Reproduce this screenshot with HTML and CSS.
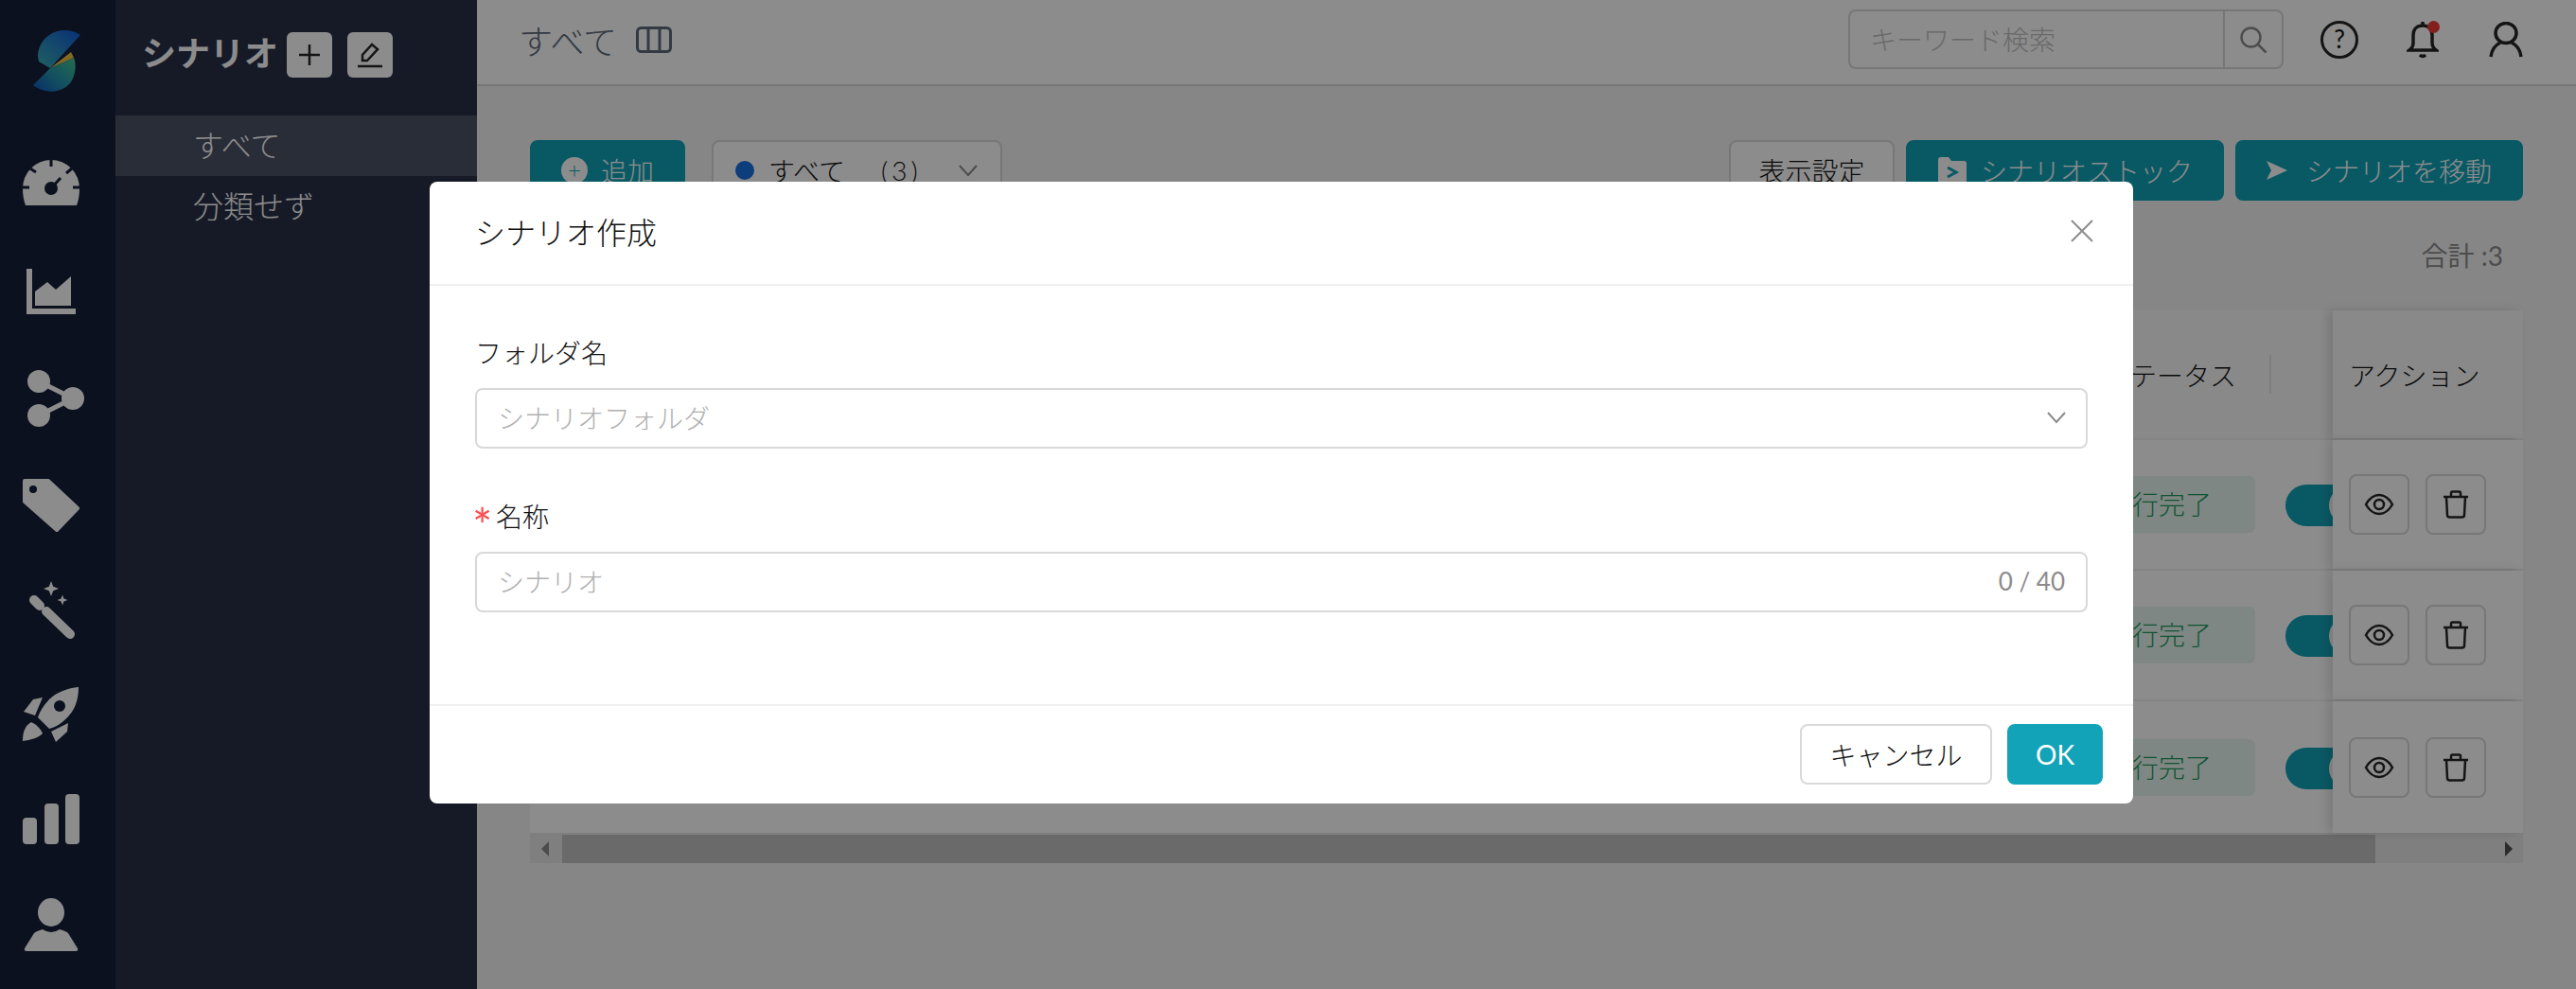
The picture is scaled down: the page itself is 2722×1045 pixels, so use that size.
FILE: index.html
```html
<!DOCTYPE html>
<html lang="ja">
<head>
    <meta charset="UTF-8">
    <title>シナリオ</title>
    <link rel="stylesheet" href="styles.css">
</head>
<body>
    <svg class="defs" aria-hidden="true">
        <symbol id="eye" viewBox="0 0 32 24">
            <path d="M2 12C6 5 10 2 16 2s10 3 14 10c-4 7-8 10-14 10S6 19 2 12z"/>
            <circle cx="16" cy="12" r="5"/>
        </symbol>
        <symbol id="trash" viewBox="0 0 28 30">
            <path d="M1 7h26M4 7l1 19q0 2.500 2.500 2.500h13q2.500 0 2.500-2.500l1-19M9 7V3q0-1.500 1.500-1.500h7Q19 1.500 19 3v4"/>
        </symbol>
        <symbol id="chevron" viewBox="0 0 20 14">
            <path d="M1 2l9 10 9-10"/>
        </symbol>
    </svg>

    <div class="app">
        <nav class="rail">
            <div class="rail-logo">
                <svg width="122" height="138" viewBox="0 0 122 138">
                    <defs>
                        <linearGradient id="logo-top" x1="1" y1="0" x2="0" y2="1">
                            <stop offset="0" stop-color="#1059d8"/>
                            <stop offset="1" stop-color="#3ab0b0"/>
                        </linearGradient>
                        <linearGradient id="logo-bottom" x1="1" y1="0" x2="0" y2="1">
                            <stop offset="0" stop-color="#45c890"/>
                            <stop offset="0.55" stop-color="#2290b0"/>
                            <stop offset="1" stop-color="#0f50c0"/>
                        </linearGradient>
                    </defs>
                    <path fill="url(#logo-top)" d="M85 37C76 31 62 30 52 37 42 44 38 56 41 65l12 7z"/>
                    <path fill="#f0c040" d="M53 72l22-17 3 6z"/>
                    <path fill="url(#logo-bottom)" d="M53 72l25-11C81 68 80 80 74 88 66 97 50 101 35 90z"/>
                </svg>
            </div>
            <div class="rail-item">
                <svg width="122" height="112" viewBox="0 0 122 112">
                    <path class="ico" d="M27 79Q24 71 24 61A30 30 0 0 1 84 61Q84 71 81 79z"/>
                    <path class="ico-cut" d="M54 31v7M32 40l6 4M76 40l-6 5M24 60h7M77 60h7M54 61L64 50"/>
                    <circle class="ico-hole" cx="54" cy="61" r="7"/>
                </svg>
            </div>
            <div class="rail-item">
                <svg width="122" height="112" viewBox="0 0 122 112">
                    <path class="ico" d="M28 34h6v42h46v6H28z"/>
                    <path class="ico" d="M37 73V58l13-10 9 8 16-14v31z"/>
                </svg>
            </div>
            <div class="rail-item">
                <svg width="122" height="112" viewBox="0 0 122 112">
                    <path class="ico-line" d="M41 41L77 59 41 77"/>
                    <circle class="ico" cx="41" cy="41" r="12"/>
                    <circle class="ico" cx="77" cy="59" r="12"/>
                    <circle class="ico" cx="41" cy="77" r="12"/>
                </svg>
            </div>
            <div class="rail-item">
                <svg width="122" height="112" viewBox="0 0 122 112">
                    <path class="ico ico-round" d="M26 34h25l31 29-22 23-34-30z"/>
                    <circle class="ico-hole" cx="35" cy="43" r="4"/>
                </svg>
            </div>
            <div class="rail-item">
                <svg width="122" height="112" viewBox="0 0 122 112">
                    <path class="ico-line ico-head" d="M36 48l6 6"/>
                    <path class="ico-line ico-stick" d="M49 60l25 24"/>
                    <path class="ico" d="M54 28l2.200 5.800L62 36l-5.800 2.200L54 44l-2.200-5.800L46 36l5.800-2.200z"/>
                    <path class="ico" d="M66 42.500l1.500 4 4 1.500-4 1.500-1.500 4-1.500-4-4-1.500 4-1.500z"/>
                </svg>
            </div>
            <div class="rail-item">
                <svg width="122" height="112" viewBox="0 0 122 112">
                    <path class="ico" d="M83 28C72 29 60 33 52 41 46 47 42 54 40 60L52 72C60 70 67 65 73 58 80 50 83 40 83 28z"/>
                    <circle class="ico-hole" cx="63" cy="48" r="6"/>
                    <path class="ico" d="M25 54L35 41 45 39 37 58z"/>
                    <path class="ico" d="M72 66L71 75 59 86 54 75z"/>
                    <path class="ico" d="M24 85C24 76 26 69 33 65 38 67 43 72 45 77 40 82 32 84 24 85z"/>
                </svg>
            </div>
            <div class="rail-item">
                <svg width="122" height="112" viewBox="0 0 122 112">
                    <rect class="ico" x="24" y="54" width="15" height="28" rx="4"/>
                    <rect class="ico" x="47" y="39" width="15" height="43" rx="4"/>
                    <rect class="ico" x="69" y="29" width="15" height="53" rx="4"/>
                </svg>
            </div>
            <div class="rail-item">
                <svg width="122" height="112" viewBox="0 0 122 112">
                    <ellipse class="ico" cx="54" cy="42" rx="14" ry="15"/>
                    <path class="ico" d="M26 80L36 64Q38 62 45 60 54 66 63 60 70 62 72 64L82 80Q83 83 80 83H28Q25 83 26 80z"/>
                </svg>
            </div>
        </nav>

        <aside class="sidebar">
            <div class="sidebar-head">
                <span class="sidebar-title">シナリオ</span>
                <button class="square-btn">
                    <svg width="24" height="24" viewBox="0 0 24 24"><path class="ico-dark" d="M12 1v22M1 12h22"/></svg>
                </button>
                <button class="square-btn">
                    <svg width="28" height="28" viewBox="0 0 28 28"><path class="ico-dark" d="M6 20v-6L16 3l6 5-11 12zM1 26h26"/></svg>
                </button>
            </div>
            <div class="side-item selected">すべて</div>
            <div class="side-item">分類せず</div>
        </aside>

        <main class="main">
            <header class="topbar">
                <div class="crumb">
                    <span class="crumb-text">すべて</span>
                    <svg width="38" height="28" viewBox="0 0 38 28">
                        <rect class="ico-col" x="1.500" y="1.500" width="35" height="25" rx="4"/>
                        <path class="ico-col" d="M13 2v24M25 2v24"/>
                    </svg>
                </div>
                <div class="top-right">
                    <div class="search">
                        <input class="search-input" placeholder="キーワード検索">
                        <span class="search-btn">
                            <svg width="30" height="30" viewBox="0 0 30 30"><circle class="ico-grey" cx="12.500" cy="12.500" r="10"/><path class="ico-grey" d="M19.500 19.500l9 9"/></svg>
                        </span>
                    </div>
                    <div class="top-icon"><span class="help">?</span></div>
                    <div class="top-icon bell">
                        <svg width="34" height="40" viewBox="0 0 34 40">
                            <path class="ico-dark ico-bold" d="M3 31q4-3 4-8v-8C7 9 11 5 17 5s10 4 10 10v8q0 5 4 8zM17 1v4M14 36q3 3 6 0"/>
                        </svg>
                        <span class="bell-dot"></span>
                    </div>
                    <div class="top-icon">
                        <svg width="36" height="38" viewBox="0 0 36 38">
                            <ellipse class="ico-dark ico-bold" cx="18" cy="12" rx="11" ry="10.500"/>
                            <path class="ico-dark ico-bold" d="M2 37c1-8 6-13 10-15M34 37c-1-8-6-13-10-15"/>
                        </svg>
                    </div>
                </div>
            </header>

            <section class="content">
                <div class="toolbar">
                    <button class="btn primary add-btn">
                        <span class="plus-dot">+</span>追加
                    </button>
                    <div class="status-select">
                        <span class="status-dot"></span>
                        <span>すべて</span>
                        <span class="status-count">(3)</span>
                        <svg class="chev" width="20" height="14"><use href="#chevron"/></svg>
                    </div>
                    <div class="toolbar-right">
                        <button class="btn">表示設定</button>
                        <button class="btn primary stock-btn">
                            <svg width="32" height="30" viewBox="0 0 32 30">
                                <path class="ico" d="M1 4q0-3 3-3h8l3 4h13q3 0 3 3v19q0 3-3 3H4q-3 0-3-3z"/>
                                <path class="ico-share" d="M11 12l9 5-9 5"/>
                            </svg>
                            シナリオストック
                        </button>
                        <button class="btn primary move-btn">
                            <svg width="22" height="20" viewBox="0 0 22 20"><path class="ico" d="M0 0l22 10L0 20l5-10z"/></svg>
                            シナリオを移動
                        </button>
                    </div>
                </div>

                <div class="summary">合計 :3</div>

                <div class="table">
                    <div class="row head-row">
                        <div class="cell-main">
                            <span>ステータス</span>
                            <span class="col-sep"></span>
                        </div>
                        <div class="cell-action">アクション</div>
                    </div>
                    <div class="row">
                        <div class="cell-main">
                            <span class="tag">実行完了</span>
                            <span class="switch"><span class="knob"></span></span>
                        </div>
                        <div class="cell-action">
                            <button class="icon-btn"><svg width="32" height="24"><use href="#eye"/></svg></button>
                            <button class="icon-btn"><svg width="28" height="30"><use href="#trash"/></svg></button>
                        </div>
                    </div>
                    <div class="row">
                        <div class="cell-main">
                            <span class="tag">実行完了</span>
                            <span class="switch"><span class="knob"></span></span>
                        </div>
                        <div class="cell-action">
                            <button class="icon-btn"><svg width="32" height="24"><use href="#eye"/></svg></button>
                            <button class="icon-btn"><svg width="28" height="30"><use href="#trash"/></svg></button>
                        </div>
                    </div>
                    <div class="row last-row">
                        <div class="cell-main">
                            <span class="tag">実行完了</span>
                            <span class="switch"><span class="knob"></span></span>
                        </div>
                        <div class="cell-action">
                            <button class="icon-btn"><svg width="32" height="24"><use href="#eye"/></svg></button>
                            <button class="icon-btn"><svg width="28" height="30"><use href="#trash"/></svg></button>
                        </div>
                    </div>
                    <div class="scrollbar">
                        <span class="arrow-left"></span>
                        <span class="thumb"></span>
                        <span class="arrow-right"></span>
                    </div>
                </div>
            </section>
        </main>
    </div>

    <div class="overlay">
        <div class="modal">
            <div class="modal-head">
                <span class="modal-title">シナリオ作成</span>
                <svg width="24" height="24" viewBox="0 0 24 24"><path class="ico-close" d="M1 1l22 22M23 1L1 23"/></svg>
            </div>
            <div class="modal-body">
                <div class="form-item">
                    <label class="form-label">フォルダ名</label>
                    <div class="field">
                        <span class="placeholder">シナリオフォルダ</span>
                        <svg class="field-chev" width="20" height="14"><use href="#chevron"/></svg>
                    </div>
                </div>
                <div class="form-item">
                    <label class="form-label"><span class="required">*</span>名称</label>
                    <div class="field">
                        <span class="placeholder">シナリオ</span>
                        <span class="counter">0 / 40</span>
                    </div>
                </div>
            </div>
            <div class="modal-foot">
                <button class="btn cancel-btn">キャンセル</button>
                <button class="btn ok-btn">OK</button>
            </div>
        </div>
    </div>
</body>
</html>
```

FILE: styles.css
```css
* {
    box-sizing: border-box;
}
html, body {
    margin: 0;
    height: 100%;
}
body {
    font-family: Lato, "Noto Sans CJK JP", sans-serif;
    font-size: 28px;
    font-weight: 300;
    color: #111;
    overflow: hidden;
}
button {
    font: inherit;
}
.defs {
    display: none;
}

.app {
    display: flex;
    height: 1045px;
}

/* icon rail */
.rail {
    width: 122px;
    flex: none;
    background: #141f37;
}
.rail-logo {
    height: 138px;
}
.rail-item {
    height: 112px;
}
.rail svg {
    display: block;
}
.ico {
    fill: #fff;
}
.ico-round {
    stroke: #fff;
    stroke-width: 4;
    stroke-linejoin: round;
}
.ico-hole {
    fill: #141f37;
}
.ico-cut {
    fill: none;
    stroke: #141f37;
    stroke-width: 3;
}
.ico-line {
    fill: none;
    stroke: #fff;
    stroke-width: 5;
}
.ico-head {
    stroke-width: 10;
    stroke-linecap: round;
}
.ico-stick {
    stroke-width: 10;
    stroke-linecap: round;
}
.ico-share {
    fill: none;
    stroke: #12a3b8;
    stroke-width: 3;
}

/* folder sidebar */
.sidebar {
    width: 382px;
    flex: none;
    background: #283147;
    color: #fff;
}
.sidebar-head {
    height: 122px;
    padding: 34px 0 0 28px;
    display: flex;
    align-items: flex-start;
    gap: 16px;
}
.sidebar-title {
    font-size: 36px;
    font-weight: 700;
    line-height: 44px;
    margin-right: -7px;
}
.square-btn {
    width: 48px;
    height: 48px;
    padding: 0;
    border: none;
    border-radius: 6px;
    background: #fff;
    display: flex;
    align-items: center;
    justify-content: center;
}
.ico-dark {
    fill: none;
    stroke: #262626;
    stroke-width: 2.500;
}
.ico-bold {
    stroke-width: 3.500;
}
.side-item {
    height: 64px;
    line-height: 64px;
    padding-left: 82px;
    font-size: 32px;
}
.side-item.selected {
    background: #4c5266;
}

/* main area */
.main {
    flex: 1;
    min-width: 0;
    background: #f4f4f5;
}
.topbar {
    height: 91px;
    background: #fff;
    border-bottom: 2px solid #d9d9d9;
    display: flex;
    align-items: center;
    justify-content: space-between;
    padding: 0 54px 6px 44px;
}
.crumb {
    display: flex;
    align-items: center;
    gap: 20px;
}
.crumb-text {
    font-size: 36px;
    color: #5f6a7a;
}
.ico-col {
    fill: none;
    stroke: #5f6a7a;
    stroke-width: 3;
}
.top-right {
    display: flex;
    align-items: center;
    gap: 48px;
}
.search {
    width: 460px;
    height: 63px;
    margin-right: -9px;
    border: 2px solid #d9d9d9;
    border-radius: 8px;
    display: flex;
}
.search-input {
    flex: 1;
    min-width: 0;
    border: none;
    background: none;
    outline: none;
    padding: 0 0 0 21px;
    font: inherit;
}
.search-input::placeholder {
    color: #bfbfbf;
}
.search-btn {
    width: 62px;
    flex: none;
    border-left: 2px solid #d9d9d9;
    display: flex;
    align-items: center;
    justify-content: center;
}
.ico-grey {
    fill: none;
    stroke: #8c8c8c;
    stroke-width: 2.500;
}
.top-icon {
    width: 40px;
    height: 44px;
    display: flex;
    align-items: center;
    justify-content: center;
    position: relative;
}
.help {
    width: 40px;
    height: 40px;
    border: 3px solid #262626;
    border-radius: 50%;
    font-size: 26px;
    font-weight: 400;
    line-height: 33px;
    text-align: center;
}
.bell-dot {
    position: absolute;
    top: 2px;
    right: 2px;
    width: 13px;
    height: 13px;
    border-radius: 50%;
    background: #f03a3a;
}

.content {
    padding: 57px 56px 0;
}
.toolbar {
    display: flex;
    align-items: flex-start;
    gap: 28px;
}
.toolbar-right {
    margin-left: auto;
    display: flex;
    gap: 12px;
}
.btn {
    height: 64px;
    padding: 0;
    background: #fff;
    border: 2px solid #d9d9d9;
    border-radius: 8px;
    color: #111;
    display: flex;
    align-items: center;
    justify-content: center;
    gap: 14px;
    white-space: nowrap;
}
.btn.primary {
    background: #12a3b8;
    border-color: #12a3b8;
    color: #fff;
}
.toolbar-right .btn {
    width: 175px;
}
.toolbar-right .stock-btn {
    width: 336px;
}
.toolbar-right .move-btn {
    width: 304px;
    gap: 20px;
}
.add-btn {
    width: 164px;
}
.plus-dot {
    width: 28px;
    height: 28px;
    border-radius: 50%;
    background: #fff;
    color: #12a3b8;
    font-size: 24px;
    line-height: 26px;
    text-align: center;
}
.status-select {
    width: 307px;
    height: 64px;
    border: 2px solid #d9d9d9;
    border-radius: 8px;
    background: #fff;
    display: flex;
    align-items: center;
    padding: 0 24px 0 23px;
}
.status-dot {
    width: 20px;
    height: 20px;
    border-radius: 50%;
    background: #1a6fe0;
    margin-right: 15px;
}
.status-count {
    margin-left: 38px;
    letter-spacing: 4px;
}
.chev {
    margin-left: auto;
    fill: none;
    stroke: #8c8c8c;
    stroke-width: 2;
}
.summary {
    margin: 38px 0;
    padding-right: 21px;
    line-height: 40px;
    text-align: right;
    font-weight: 400;
    color: #8c8c8c;
}

/* table */
.table {
    background: #fff;
}
.row {
    display: flex;
    height: 138px;
    border-bottom: 2px solid #f0f0f0;
}
.head-row {
    height: 137px;
    background: #fafafa;
}
.last-row {
    height: 139px;
    border-bottom: none;
}
.cell-main {
    flex: 1;
    min-width: 0;
    overflow: hidden;
    display: flex;
    align-items: center;
    justify-content: flex-end;
}
.head-row .cell-main {
    padding-right: 65px;
}
.col-sep {
    width: 2px;
    height: 41px;
    margin-left: 35px;
    background: #e5e5e5;
}
.cell-action {
    width: 201px;
    flex: none;
    padding-left: 17px;
    display: flex;
    align-items: center;
    gap: 17px;
    background: #fff;
    box-shadow: -6px 0 10px rgba(0, 0, 0, 0.12);
    position: relative;
}
.head-row .cell-action {
    background: #fafafa;
}
.tag {
    height: 60px;
    line-height: 60px;
    padding: 0 46px 0 24px;
    margin-right: 32px;
    border-radius: 6px;
    background: #e6f6ee;
    color: #1f9a62;
    white-space: nowrap;
}
.switch {
    width: 88px;
    height: 44px;
    flex: none;
    margin: 2px -38px 0 0;
    border-radius: 22px;
    background: #12a3b8;
    padding: 2px;
    display: flex;
    justify-content: flex-end;
}
.knob {
    width: 40px;
    height: 40px;
    border-radius: 50%;
    background: #fff;
}
.icon-btn {
    width: 64px;
    height: 64px;
    padding: 0;
    background: #fff;
    border: 2px solid #d9d9d9;
    border-radius: 8px;
    display: flex;
    align-items: center;
    justify-content: center;
}
.icon-btn svg {
    fill: none;
    stroke: #262626;
    stroke-width: 2.500;
}
.scrollbar {
    height: 32px;
    padding-top: 2px;
    background: #e8e8e8;
    display: flex;
    align-items: center;
}
.arrow-left {
    width: 34px;
    height: 30px;
    flex: none;
    position: relative;
}
.arrow-left::before {
    content: "";
    position: absolute;
    left: 12px;
    top: 7px;
    border: 8px solid transparent;
    border-left: none;
    border-right-color: #8a8a8a;
}
.thumb {
    width: 1916px;
    height: 30px;
    background: #c2c2c2;
}
.arrow-right {
    flex: 1;
    height: 30px;
    position: relative;
}
.arrow-right::before {
    content: "";
    position: absolute;
    right: 11px;
    top: 7px;
    border: 8px solid transparent;
    border-right: none;
    border-left-color: #505050;
}

/* dialog */
.overlay {
    position: fixed;
    inset: 0;
    background: rgba(0, 0, 0, 0.45);
    padding: 192px 0 0 454px;
}
.modal {
    width: 1800px;
    background: #fff;
    border-radius: 8px;
}
.modal-head {
    height: 110px;
    border-bottom: 2px solid #f0f0f0;
    padding: 0 42px 4px 48px;
    display: flex;
    align-items: center;
    justify-content: space-between;
}
.modal-title {
    font-size: 32px;
}
.ico-close {
    fill: none;
    stroke: #8c8c8c;
    stroke-width: 2;
}
.modal-body {
    padding: 51px 48px 97px;
}
.form-item + .form-item {
    margin-top: 52px;
}
.form-label {
    display: block;
    line-height: 40px;
    margin-bottom: 17px;
}
.required {
    display: inline-block;
    width: 22px;
    margin-left: -3px;
    margin-right: 3px;
    font-size: 50px;
    font-weight: 400;
    line-height: 0;
    vertical-align: -17px;
    color: #ff4d4f;
}
.field {
    height: 64px;
    border: 2px solid #d9d9d9;
    border-radius: 8px;
    padding: 0 22px 3px;
    display: flex;
    align-items: center;
    justify-content: space-between;
}
.placeholder {
    color: #b0b0b0;
}
.counter {
    font-size: 26px;
    font-weight: 400;
    color: #8c8c8c;
}
.field-chev {
    fill: none;
    stroke: #8c8c8c;
    stroke-width: 2;
    margin-right: -1px;
}
.modal-foot {
    height: 105px;
    border-top: 2px solid #f0f0f0;
    padding: 19px 32px 0 0;
    display: flex;
    justify-content: flex-end;
    gap: 16px;
}
.cancel-btn {
    width: 203px;
}
.ok-btn {
    width: 101px;
    background: #12a3b8;
    border-color: #12a3b8;
    color: #fff;
    font-weight: 400;
}
```
